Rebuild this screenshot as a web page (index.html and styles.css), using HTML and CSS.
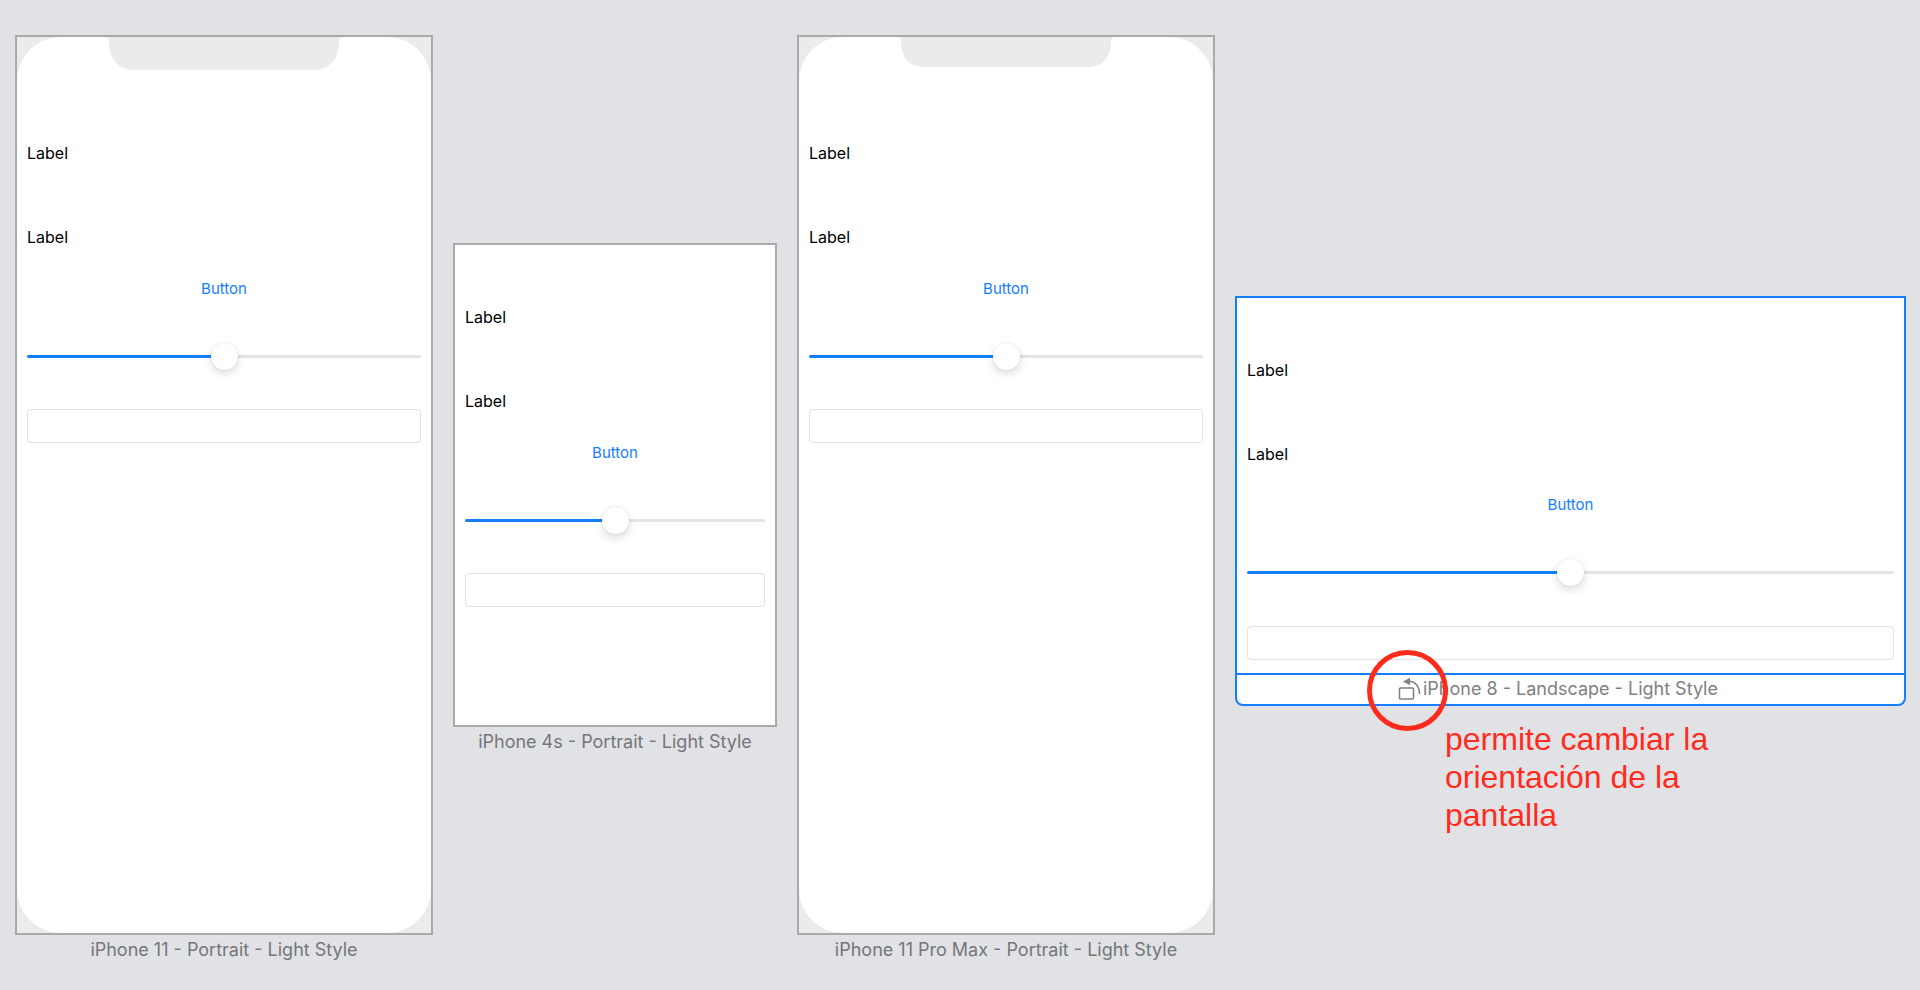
FILE: index.html
```html
<!DOCTYPE html>
<html lang="es">
<head>
<meta charset="utf-8">
<meta name="viewport" content="width=device-width, initial-scale=1">
<title>Preview</title>
<link rel="stylesheet" href="styles.css">
</head>
<body>
<main class="canvas">

  <figure class="device">
    <div class="frame frame-tall">
      <div class="screen screen-rounded">
        <svg class="notch" width="242" height="33" viewBox="0 0 242 33" aria-hidden="true"><path d="M0 0C4 0 6 2 6 6C6 23 17 33 32 33H210C225 33 236 23 236 6C236 2 238 0 242 0Z"/></svg>
        <label class="label label-first" for="slider-1">Label</label>
        <label class="label" for="field-1">Label</label>
        <button class="button" type="button">Button</button>
        <input class="slider" id="slider-1" type="range" value="50">
        <input class="field" id="field-1" type="text">
      </div>
    </div>
    <figcaption class="caption"><span class="caption-text">iPhone 11 - Portrait - Light Style</span></figcaption>
  </figure>

  <figure class="device">
    <div class="frame frame-small">
      <div class="screen">
        <label class="label label-first" for="slider-2">Label</label>
        <label class="label" for="field-2">Label</label>
        <button class="button" type="button">Button</button>
        <input class="slider" id="slider-2" type="range" value="50">
        <input class="field" id="field-2" type="text">
      </div>
    </div>
    <figcaption class="caption"><span class="caption-text">iPhone 4s - Portrait - Light Style</span></figcaption>
  </figure>

  <figure class="device">
    <div class="frame frame-tall">
      <div class="screen screen-rounded">
        <svg class="notch" width="220" height="30" viewBox="0 0 220 30" aria-hidden="true"><path d="M0 0C4 0 5 2 5 6C5 21 15 30 28 30H192C205 30 215 21 215 6C215 2 216 0 220 0Z"/></svg>
        <label class="label label-first" for="slider-3">Label</label>
        <label class="label" for="field-3">Label</label>
        <button class="button" type="button">Button</button>
        <input class="slider" id="slider-3" type="range" value="50">
        <input class="field" id="field-3" type="text">
      </div>
    </div>
    <figcaption class="caption"><span class="caption-text">iPhone 11 Pro Max - Portrait - Light Style</span></figcaption>
  </figure>

  <figure class="device device-selected">
    <div class="frame frame-wide">
      <div class="screen">
        <label class="label label-first" for="slider-4">Label</label>
        <label class="label" for="field-4">Label</label>
        <button class="button" type="button">Button</button>
        <input class="slider" id="slider-4" type="range" value="50">
        <input class="field" id="field-4" type="text">
      </div>
    </div>
    <figcaption class="caption">
      <span class="rotate-anchor">
        <button class="rotate" type="button" aria-label="Rotate">
          <svg width="26" height="24" viewBox="0 0 26 24" aria-hidden="true">
            <rect class="rotate-line" x="2.5" y="11" width="14" height="11" rx="1"/>
            <path class="rotate-line" d="M12 4.3C18 4.5 22.5 9 22.5 17"/>
            <path class="rotate-head" d="M6 4.5L13 .8V8.2Z"/>
          </svg>
        </button>
        <span class="ring"></span>
        <span class="note">permite cambiar la orientación de la pantalla</span>
      </span>
      <span class="caption-text">iPhone 8 - Landscape - Light Style</span>
    </figcaption>
  </figure>

</main>
</body>
</html>
```

FILE: styles.css
```css
* {
  box-sizing: border-box;
}

body {
  margin: 0;
  background: #e1e2e6;
  font-family: Inter, "Liberation Sans", sans-serif;
  color: #000;
}

.canvas {
  display: grid;
  grid-template-columns: 418fr 324fr 418fr 671fr;
  align-items: center;
  gap: 20px;
  padding: 35px 14px 24px 15px;
}

.device {
  margin: 0;
  min-width: 0;
}

.frame {
  border: 2px solid #a9aaaa;
  background: #ebebeb;
}

.frame-tall {
  aspect-ratio: 418 / 900;
}

.frame-small {
  aspect-ratio: 324 / 484;
}

.frame-wide {
  aspect-ratio: 671 / 379;
}

.screen {
  position: relative;
  display: flex;
  flex-direction: column;
  height: 100%;
  padding: 62px 10px 11px;
  background: #fff;
}

.screen-rounded {
  padding-top: 106px;
  border-radius: 44px;
}

.notch {
  position: absolute;
  top: 0;
  left: 50%;
  transform: translateX(-50%);
  fill: #ebebeb;
}

.label {
  font-size: 16px;
  line-height: 20px;
}

.label-first {
  margin-bottom: 64px;
}

.button {
  align-self: center;
  height: 30px;
  margin: 26px 0 39px;
  padding: 0;
  border: 0;
  background: none;
  color: #147eff;
  font-family: inherit;
  font-size: 15px;
}

.slider {
  appearance: none;
  width: 100%;
  height: 28px;
  margin: 0 0 39px;
  background: none;
}

.slider::-webkit-slider-runnable-track {
  height: 3px;
  border-radius: 2px;
  background: linear-gradient(to right, #147eff 50%, #e4e4e4 50%);
}

.slider::-webkit-slider-thumb {
  appearance: none;
  width: 27px;
  height: 27px;
  margin-top: -12px;
  border-radius: 50%;
  background: #fff;
  box-shadow: 0 0 2px rgba(0, 0, 0, 0.12), 0 4px 10px rgba(0, 0, 0, 0.14);
}

.field {
  width: 100%;
  height: 34px;
  padding: 0 8px;
  border: 1px solid #e2e2e2;
  border-radius: 4px;
  background: #fff;
  font-family: inherit;
  font-size: 16px;
}

.caption {
  display: grid;
  grid-template-columns: 1fr auto 1fr;
  align-items: center;
  height: 31px;
  padding-bottom: 2px;
  color: #757678;
  font-size: 18px;
  line-height: 20px;
  white-space: nowrap;
}

.caption-text {
  grid-column: 2;
}

.device-selected .frame {
  border-color: #147eff;
}

.device-selected .caption {
  padding-bottom: 0;
  border: 2px solid #147eff;
  border-top: 0;
  border-radius: 0 0 8px 8px;
  background: #fff;
  color: #808080;
}

.rotate-anchor {
  position: relative;
  justify-self: end;
  display: flex;
}

.rotate {
  display: flex;
  padding: 0;
  border: 0;
  background: none;
}

.rotate-line {
  fill: none;
  stroke: #808080;
  stroke-width: 1.5;
}

.rotate-head {
  fill: #808080;
}

.ring {
  position: absolute;
  top: -27px;
  left: -30px;
  width: 81px;
  height: 81px;
  border: 5px solid #ff2b1c;
  border-radius: 50%;
  pointer-events: none;
}

.note {
  position: absolute;
  top: 43px;
  left: 48px;
  width: 280px;
  color: #ff2b1c;
  font-family: "Liberation Sans", Arial, sans-serif;
  font-size: 32px;
  line-height: 38px;
  white-space: normal;
}
```
